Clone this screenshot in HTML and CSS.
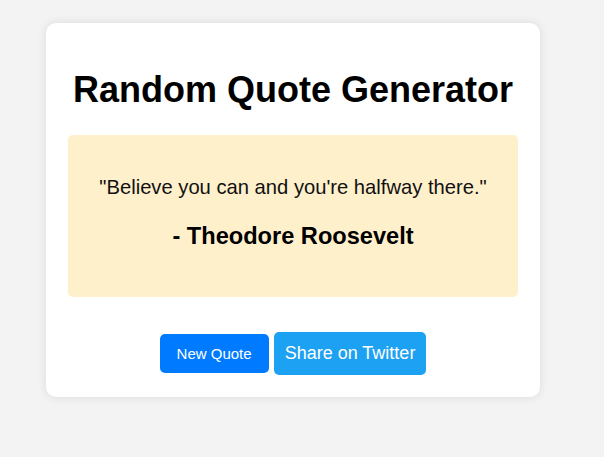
FILE: index.html
```html
<!DOCTYPE html>
<html>
<head>
<meta charset="utf-8">
<link rel="stylesheet" href="styles.css">
</head>
<body>
<div class="card">
  <h1 class="title">Random Quote Generator</h1>
  <div class="quote-box">
    <p class="quote">"Believe you can and you're halfway there."</p>
    <p class="author">- Theodore Roosevelt</p>
  </div>
  <div class="actions">
    <button class="btn btn-new">New Quote</button>
    <button class="btn btn-twitter">Share on Twitter</button>
  </div>
</div>
</body>
</html>
```
FILE: styles.css
```css
html, body {
  margin: 0;
  padding: 0;
}
body {
  background: #f3f3f3;
  font-family: "Liberation Sans", Arial, sans-serif;
  padding: 23px 0 0 46px;
  height: 457px;
  box-sizing: border-box;
}
.card {
  width: 494px;
  box-sizing: border-box;
  background: #fff;
  border-radius: 10px;
  box-shadow: 0 0 10px rgba(0, 0, 0, 0.1);
  padding: 22px 22px 22px;
  text-align: center;
}
.title {
  font-size: 36px;
  font-weight: bold;
  margin: 24px 0 24px;
  color: #000;
}
.quote-box {
  background: #fff0cc;
  border-radius: 5px;
  padding: 41px 20px 47px;
}
.quote {
  font-size: 20.2px;
  line-height: 23px;
  margin: 0 0 24px;
  color: #111;
}
.author {
  font-size: 23.6px;
  line-height: 27px;
  font-weight: bold;
  margin: 0;
  color: #000;
}
.actions {
  margin-top: 35px;
  display: flex;
  justify-content: center;
  align-items: center;
  gap: 5px;
}
.btn {
  border: none;
  color: #fff;
  border-radius: 5px;
  font-family: "Liberation Sans", Arial, sans-serif;
  cursor: pointer;
}
.btn-new {
  background: #007bff;
  font-size: 15px;
  line-height: 17px;
  padding: 11px 17px;
}
.btn-twitter {
  background: #1da1f2;
  font-size: 18px;
  line-height: 21px;
  padding: 11px 11px;
}
```
